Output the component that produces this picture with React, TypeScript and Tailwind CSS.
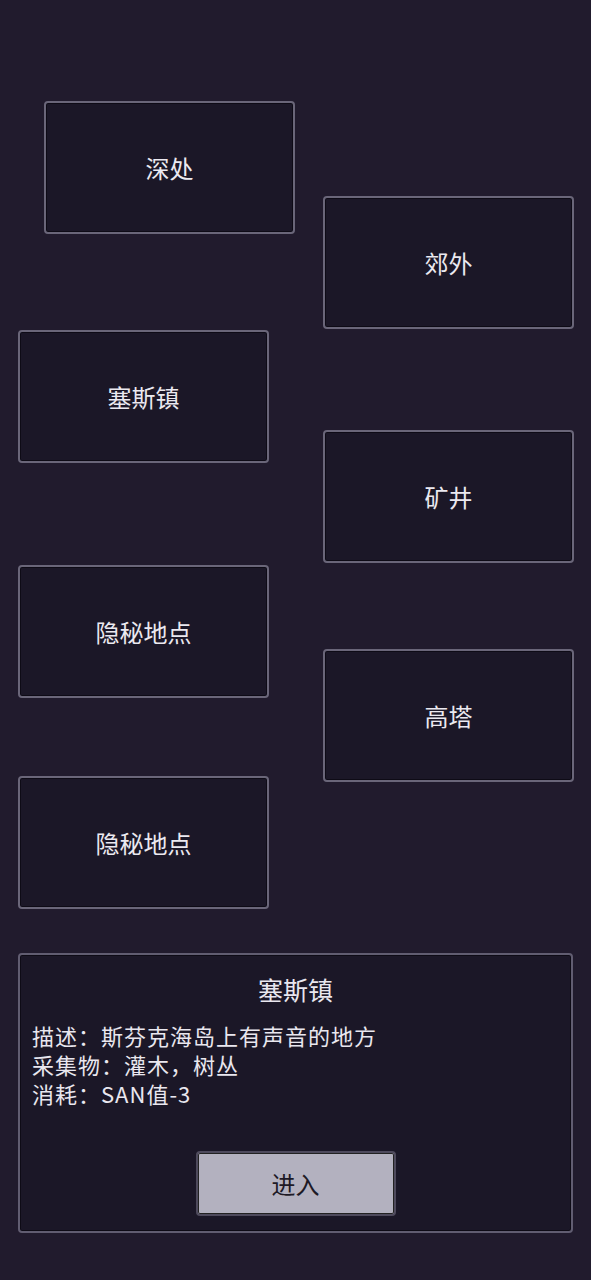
const nodes = [
  { name: '深处', left: 'left-[44px]', top: 'top-[101px]' },
  { name: '郊外', left: 'left-[323px]', top: 'top-[196px]' },
  { name: '塞斯镇', left: 'left-[18px]', top: 'top-[330px]' },
  { name: '矿井', left: 'left-[323px]', top: 'top-[430px]' },
  { name: '隐秘地点', left: 'left-[18px]', top: 'top-[565px]' },
  { name: '高塔', left: 'left-[323px]', top: 'top-[649px]' },
  { name: '隐秘地点', left: 'left-[18px]', top: 'top-[776px]' },
];

const font = { fontFamily: '"Noto Sans CJK SC", "Noto Sans", sans-serif' };

export default function App() {
  return (
    <main className="min-h-[1280px] w-full bg-[#211b2d] text-[#e9e7ef]" style={font}>
      {/* map canvas: node placement is the content */}
      <div className="relative h-[953px] w-full">
        {nodes.map((n, i) => (
          <button
            key={i}
            className={`absolute ${n.left} ${n.top} flex h-[133px] w-[251px] items-center justify-center rounded-[4px] border-2 border-[#6a6679] bg-[#1b1727] text-[24px] text-[#ebe9f0] shadow-[inset_0_0_0_1px_#0e0b16]`}
          >
            {n.name}
          </button>
        ))}
      </div>

      <section className="mx-[18px] flex h-[280px] flex-col rounded-[4px] border-2 border-[#615d71] bg-[#1b1727] px-3 pt-[16px] shadow-[inset_0_0_0_1px_#0e0b16]">
        <h2 className="text-center text-[25px] leading-[36px]">塞斯镇</h2>
        <div className="mt-[14px] text-[22px] leading-[29px] tracking-[1px]">
          <p>描述：斯芬克海岛上有声音的地方</p>
          <p>采集物：灌木，树丛</p>
          <p>消耗：SAN值-3</p>
        </div>
        <div className="mt-auto mb-[15px] flex justify-center">
          <button className="h-[65px] w-[200px] rounded-[4px] border-2 border-[#4e4a5c] bg-[#b3b1bf] text-[24px] text-[#1e1a26] shadow-[inset_0_0_0_1px_#222]">
            进入
          </button>
        </div>
      </section>
    </main>
  );
}
